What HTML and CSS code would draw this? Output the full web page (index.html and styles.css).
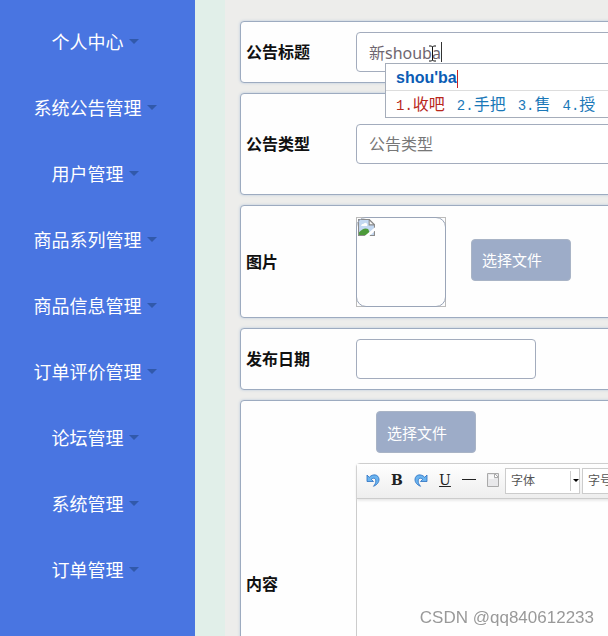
FILE: index.html
```html
<!DOCTYPE html>
<html lang="zh-CN">
<head>
    <meta charset="UTF-8">
    <meta name="viewport" content="width=device-width, initial-scale=1.0">
    <title>系统公告管理</title>
    <link rel="stylesheet" href="styles.css">
</head>
<body>
    <div class="layout">
        <nav class="sidebar">
            <a href="#" class="menu-item">个人中心<span class="caret"></span></a>
            <a href="#" class="menu-item">系统公告管理<span class="caret"></span></a>
            <a href="#" class="menu-item">用户管理<span class="caret"></span></a>
            <a href="#" class="menu-item">商品系列管理<span class="caret"></span></a>
            <a href="#" class="menu-item">商品信息管理<span class="caret"></span></a>
            <a href="#" class="menu-item">订单评价管理<span class="caret"></span></a>
            <a href="#" class="menu-item">论坛管理<span class="caret"></span></a>
            <a href="#" class="menu-item">系统管理<span class="caret"></span></a>
            <a href="#" class="menu-item">订单管理<span class="caret"></span></a>
        </nav>

        <main class="main">
            <form class="form">
                <div class="form-row">
                    <label class="form-label" for="title">公告标题</label>
                    <div class="field">
                        <input class="form-control" type="text" id="title" value="新shouba">
                        <span class="text-caret"></span>
                        <svg class="ibeam" width="9" height="17" viewBox="0 0 9 17" aria-hidden="true">
                            <path d="M1 1h2.500l1 1 1-1H8M1 16h2.500l1-1 1 1H8M4.500 2v13" fill="none" stroke="#111" stroke-width="1"/>
                        </svg>
                        <!-- 输入法候选框 -->
                        <div class="ime">
                            <div class="ime-input">shou'ba</div>
                            <div class="ime-list">
                                <span class="ime-item active"><span class="ime-num">1.</span>收吧</span>
                                <span class="ime-item"><span class="ime-num">2.</span>手把</span>
                                <span class="ime-item"><span class="ime-num">3.</span>售</span>
                                <span class="ime-item"><span class="ime-num">4.</span>授</span>
                            </div>
                        </div>
                    </div>
                </div>

                <div class="form-row row-type">
                    <label class="form-label" for="type">公告类型</label>
                    <div class="field">
                        <input class="form-control" type="text" id="type" placeholder="公告类型">
                    </div>
                </div>

                <div class="form-row row-image">
                    <label class="form-label" for="pickImage">图片</label>
                    <div class="field upload">
                        <div class="preview">
                            <svg width="17" height="17" viewBox="0 0 16 16" aria-hidden="true">
                                <path d="M.5.5h10l5 5v10H.5z" fill="#c3d8f2" stroke="#8c8c8c"/>
                                <path d="M3 6.500a2 2 0 0 1 2.500-2A1.800 1.800 0 0 1 8.500 6.500z" fill="#fff"/>
                                <path d="M1 15v-2.500C4 9 7 8 9.500 9.500L12 15z" fill="#4c9a3a"/>
                                <path d="M10.500.5v5h5z" fill="#f4f4f4" stroke="#8c8c8c"/>
                                <path d="M6 16.200L16.200 7.500v3.500L10.500 16.200z" fill="#fff"/>
                                <path d="M11.500 15.500h4v-4" fill="none" stroke="#8c8c8c"/>
                            </svg>
                        </div>
                        <button class="file-btn" type="button" id="pickImage">选择文件</button>
                    </div>
                </div>

                <div class="form-row">
                    <label class="form-label" for="date">发布日期</label>
                    <div class="field">
                        <input class="form-control date" type="text" id="date">
                    </div>
                </div>

                <div class="form-row">
                    <label class="form-label" for="content">内容</label>
                    <div class="field">
                        <button class="file-btn" type="button">选择文件</button>
                        <div class="editor">
                            <div class="toolbar">
                                <button class="tool" type="button" aria-label="撤销">
                                    <svg width="14" height="14" viewBox="0 0 14 14">
                                        <path d="M1 2v6.500h6.500L5.300 6.300C7.500 4.300 9.800 5.200 9.800 8c0 2-.8 3.500-2.300 5.300 3.500-1.500 5.800-4 5.500-7.300C12.500 1.500 7 .3 3.300 4.300z" fill="#6ab4f0" stroke="#2b6fc0" stroke-width=".8"/>
                                    </svg>
                                </button>
                                <button class="tool bold" type="button" aria-label="加粗">B</button>
                                <button class="tool" type="button" aria-label="重做">
                                    <svg width="14" height="14" viewBox="0 0 14 14">
                                        <path d="M13 2v6.500H6.500l2.200-2.200C6.500 4.300 4.200 5.200 4.200 8c0 2 .8 3.500 2.300 5.300C3 11.800.7 9.300 1 6 1.500 1.500 7 .3 10.700 4.300z" fill="#6ab4f0" stroke="#2b6fc0" stroke-width=".8"/>
                                    </svg>
                                </button>
                                <button class="tool underline" type="button" aria-label="下划线">U</button>
                                <button class="tool" type="button" aria-label="分隔线">
                                    <svg width="14" height="14" viewBox="0 0 14 14">
                                        <path d="M0 6.500h14" stroke="#222"/>
                                    </svg>
                                </button>
                                <button class="tool" type="button" aria-label="清空">
                                    <svg width="12" height="14" viewBox="0 0 12 14">
                                        <path d="M.5.5h11v13H.5z" fill="#e8e8ea" stroke="#aaa"/>
                                        <path d="M2 2h5v4H2z" fill="#f8f8f8"/>
                                        <path d="M7.500.5v4h4z" fill="#fff" stroke="#aaa"/>
                                    </svg>
                                </button>
                                <div class="combo">
                                    <select aria-label="字体"><option>字体</option></select>
                                    <span class="combo-arrow"></span>
                                </div>
                                <div class="combo">
                                    <select aria-label="字号"><option>字号</option></select>
                                    <span class="combo-arrow"></span>
                                </div>
                            </div>
                            <textarea class="editor-body" id="content"></textarea>
                        </div>
                    </div>
                </div>
            </form>
        </main>
    </div>

    <div class="watermark">CSDN @qq840612233</div>
</body>
</html>
```

FILE: styles.css
```css
* {
    box-sizing: border-box;
}

body {
    margin: 0;
    font-family: "Noto Sans", "Noto Sans CJK SC", sans-serif;
    font-size: 16px;
    background: #e1efe9;
    overflow-x: hidden;
}

button, input, select, textarea {
    font-family: inherit;
}

.layout {
    display: flex;
    min-height: 100vh;
}

/* 左侧菜单 */
.sidebar {
    flex: 0 0 195px;
    padding-top: 8px;
    background: #4975e1;
}

.menu-item {
    display: flex;
    align-items: center;
    justify-content: center;
    height: 66px;
    padding-right: 5px;
    color: #fff;
    font-size: 18px;
    text-decoration: none;
}

.caret {
    margin-left: 5px;
    border: 5px solid transparent;
    border-top-color: #3159ab;
    border-bottom: 0;
}

/* 表单 */
.main {
    flex: 1;
    min-width: 0;
    margin-left: 30px;
    padding: 21px 0 20px 15px;
    background: #ededeb;
    overflow: hidden;
}

.form {
    display: flex;
    flex-direction: column;
    gap: 10px;
    min-width: 800px;
}

.form-row {
    display: flex;
    align-items: center;
    padding: 10px 5px;
    border: 1px solid #9dabc0;
    border-radius: 4px;
    background: #fefefe;
    box-shadow: 0 0 3px #b9c8dc;
}

.row-type {
    padding: 30px 5px;
}

.row-image {
    min-height: 113px;
}

.form-label {
    flex: 0 0 110px;
    padding-bottom: 2px;
    color: #111;
    font-weight: bold;
}

.field {
    position: relative;
    flex: 1;
}

.form-control {
    display: block;
    width: 100%;
    height: 40px;
    padding: 0 12px;
    border: 1px solid #a3acbd;
    border-radius: 4px;
    background: #fff;
    color: #6f6670;
    font-size: 16px;
}

.form-control::placeholder {
    color: #777;
}

.date {
    width: 180px;
}

.text-caret {
    position: absolute;
    left: 85px;
    top: 10px;
    width: 1px;
    height: 20px;
    background: #333;
}

.ibeam {
    position: absolute;
    left: 72px;
    top: 13px;
}

.ime {
    position: absolute;
    z-index: 2;
    left: 29px;
    top: 31px;
    width: 280px;
    border: 1px solid #a5adba;
    background: #fff;
}

.ime-input {
    height: 27px;
    padding-left: 10px;
    border-bottom: 1px solid #ddd;
    color: #0b5cb5;
    font: bold 16px/27px "Liberation Sans", sans-serif;
}

.ime-input::after {
    content: "";
    display: inline-block;
    width: 1px;
    height: 18px;
    background: #c22;
    vertical-align: middle;
}

.ime-list {
    display: flex;
    gap: 12px;
    height: 26px;
    padding-left: 10px;
    line-height: 26px;
    color: #1a78b8;
}

.ime-item.active {
    color: #b8281c;
}

.ime-num {
    font-family: "Liberation Mono", monospace;
    font-size: 14px;
}

.upload {
    display: flex;
    align-items: center;
    gap: 5px;
}

.preview {
    width: 90px;
    height: 90px;
    border: 1px solid #bbb;
    position: relative;
}

.preview::after {
    content: "";
    position: absolute;
    inset: -1px;
    border: 1px solid #9aa5b8;
    border-radius: 10px;
}

.preview svg {
    display: block;
    margin: 1px;
}

.file-btn {
    display: block;
    width: 100px;
    height: 42px;
    margin: 0 0 4px 20px;
    padding: 0 10px;
    border: 1px solid #a9b4c6;
    border-radius: 4px;
    background: #9dacc8;
    color: #fff;
    font-size: 15px;
    text-align: left;
}

/* 富文本编辑器 */
.editor {
    margin-top: 10px;
    border: 1px solid #ccc;
    border-radius: 4px;
}

.toolbar {
    display: flex;
    align-items: center;
    height: 35px;
    padding: 0 4px;
    border-bottom: 1px solid #ccc;
    background: linear-gradient(#fff, #eee);
    box-shadow: 0 1px 3px #ddd;
}

.tool {
    display: flex;
    align-items: center;
    justify-content: center;
    width: 24px;
    height: 24px;
    margin-bottom: 3px;
    padding: 0;
    border: 0;
    background: none;
    color: #222;
    font-family: "DejaVu Serif", serif;
    font-size: 14px;
}

.bold {
    font-weight: bold;
}

.underline {
    text-decoration: underline;
}

.combo {
    position: relative;
    width: 75px;
    height: 26px;
    margin-right: 2px;
    border: 1px solid #ccc;
    background: #fff;
}

.combo select {
    display: block;
    width: 100%;
    height: 22px;
    padding: 0 5px;
    border: 0;
    background: none;
    color: #555;
    font-size: 12px;
    appearance: none;
}

.combo-arrow {
    position: absolute;
    top: 2px;
    right: 0;
    bottom: 2px;
    width: 9px;
    border-left: 1px solid #ccc;
    pointer-events: none;
}

.combo-arrow::after {
    content: "";
    position: absolute;
    top: 8px;
    left: 2px;
    border: 3px solid transparent;
    border-top-color: #000;
    border-bottom: 0;
}

.editor-body {
    display: block;
    width: 100%;
    height: 257px;
    border: 0;
    background: none;
    resize: none;
}

.watermark {
    position: fixed;
    right: 14px;
    bottom: 8px;
    color: #999;
    font-family: "Liberation Sans", sans-serif;
    font-size: 17px;
    line-height: 20px;
    text-shadow: 1px 1px 0 #fff;
}
```
